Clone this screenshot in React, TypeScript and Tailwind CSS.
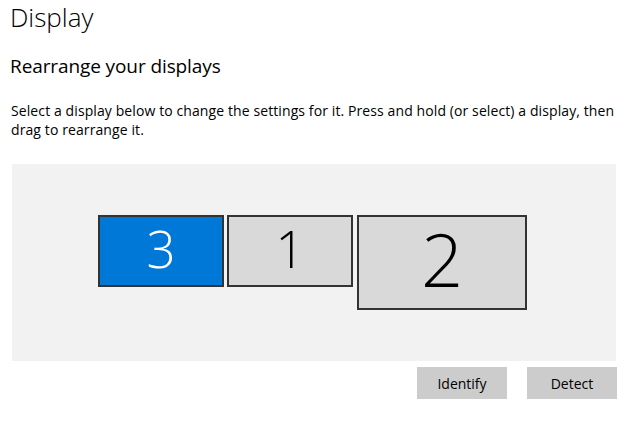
export default function App() {
  return (
    <div className="w-[633px] h-[424px] bg-white text-black overflow-hidden pl-3 font-['Open_Sans',sans-serif]">
      <div className="w-[604px]">
        <h1 className="text-[26px] leading-[34px] font-light -ml-[2px]">Display</h1>
        <h2 className="mt-[18px] text-[19px] leading-[28px] font-normal tracking-[-0.1px] -ml-[2px]">
          Rearrange your displays
        </h2>
        <p className="mt-[21px] text-[14px] leading-[19px] tracking-[0.1px] -ml-[1px] whitespace-nowrap">
          Select a display below to change the settings for it. Press and hold (or select) a display, then
          <br />
          drag to rearrange it.
        </p>

        <div className="mt-[25px] h-[197px] bg-[#f2f2f2] flex items-center justify-center">
          <div className="flex items-start gap-[3px] ml-[-3px]">
            <div className="w-[126px] h-[72px] bg-[#0078d7] border-2 border-[#333333] flex items-center justify-center pb-[5px] text-white text-[51px] font-light leading-none">
              3
            </div>
            <div className="w-[126px] h-[72px] bg-[#d9d9d9] border-2 border-[#333333] flex items-center justify-center pb-[5px] text-black text-[51px] font-light leading-none">
              1
            </div>
            <div className="ml-[1px] w-[170px] h-[95px] bg-[#d9d9d9] border-2 border-[#333333] flex items-center justify-center pb-[8px] text-black text-[74px] font-light leading-none">
              2
            </div>
          </div>
        </div>

        <div className="mt-[6px] flex justify-end gap-5 -mr-[1px]">
          <button className="w-[90px] h-[32px] bg-[#cccccc] text-[14px] text-black">Identify</button>
          <button className="w-[90px] h-[32px] bg-[#cccccc] text-[14px] text-black">Detect</button>
        </div>
      </div>
    </div>
  );
}
